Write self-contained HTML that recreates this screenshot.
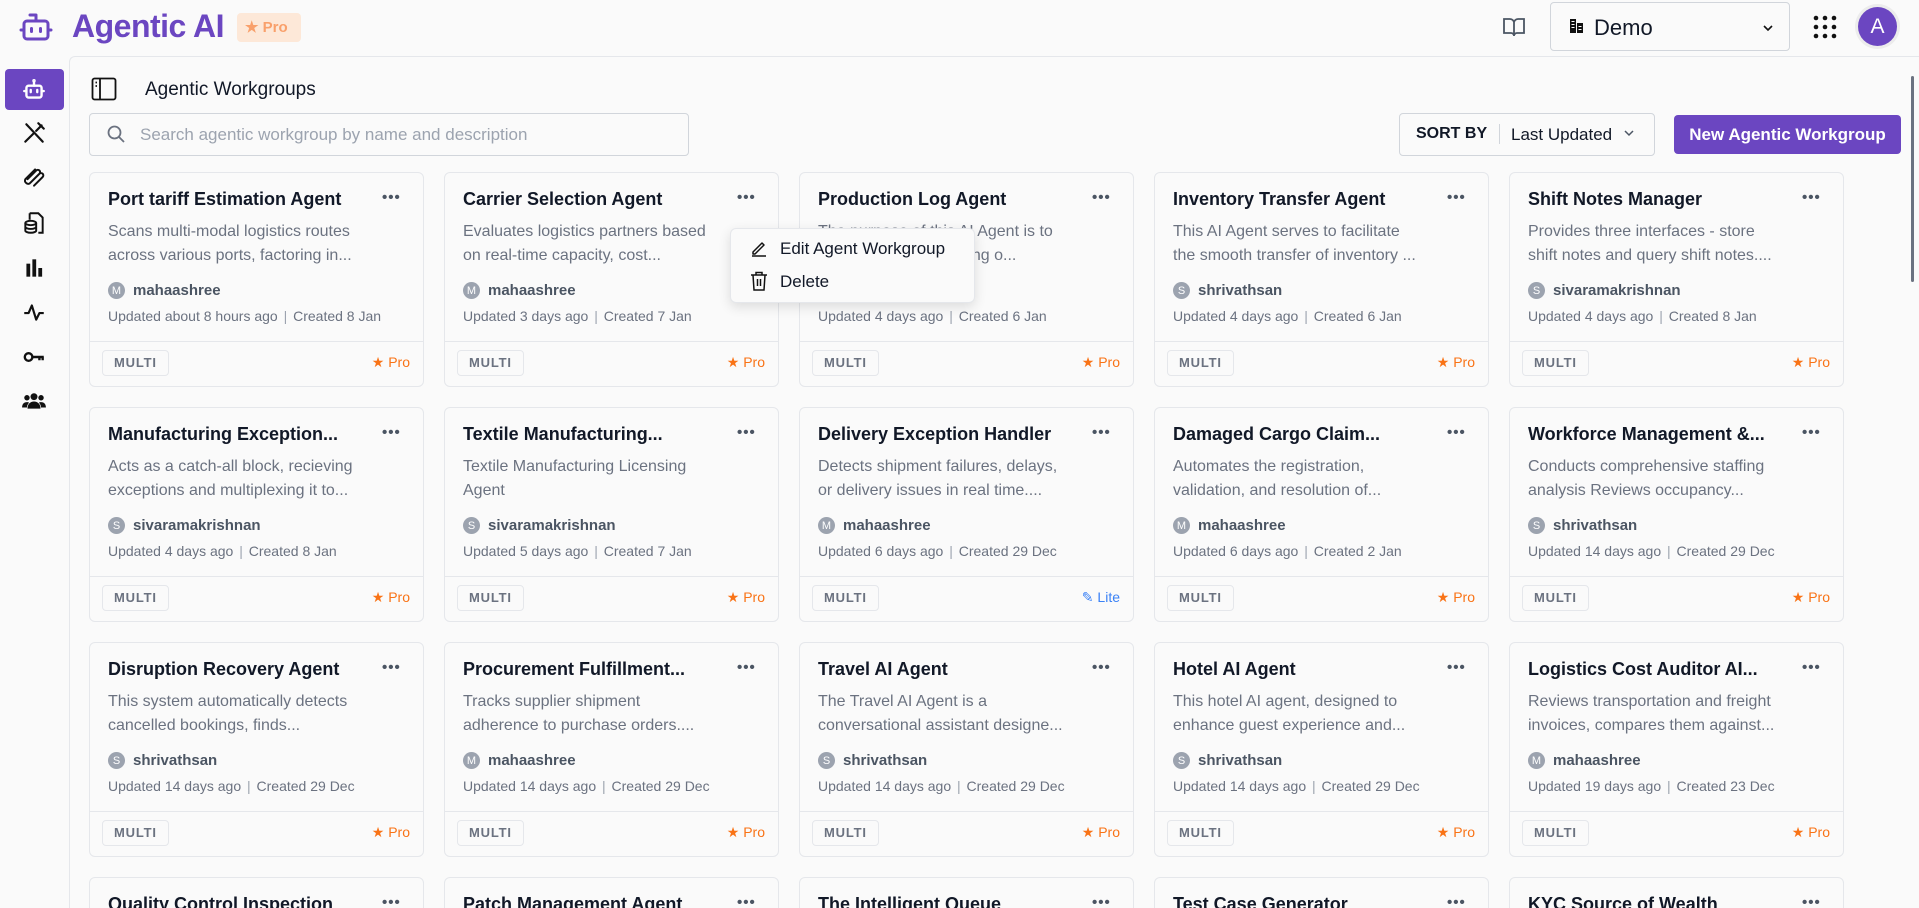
<!DOCTYPE html>
<html style="width:1919px;height:908px;overflow:hidden"><head><meta charset="utf-8"><style>
*{box-sizing:border-box;margin:0;padding:0}
body{width:1919px;height:908px;overflow:hidden;background:#fafafa;font-family:"Liberation Sans",Arial,sans-serif;color:#111827;position:relative}
.abs{position:absolute}
.card{position:absolute;width:335px;height:215px;border:1px solid #e5e7eb;border-radius:6px;background:#fafafa;overflow:hidden}
.t{position:absolute;left:18px;top:16px;width:262px;font-size:18px;font-weight:700;white-space:nowrap;overflow:hidden;color:#111827}
.dots{position:absolute;left:292px;top:16px;font-size:15px;font-weight:700;color:#4b5563;letter-spacing:1px}
.d{position:absolute;left:18px;top:47px;width:310px;font-size:16px;line-height:24px;color:#6b7280;white-space:nowrap}
.a{position:absolute;left:18px;top:109px;font-size:15px;font-weight:600;color:#4b5563;display:flex;align-items:center;gap:8px}
.av{width:17px;height:17px;border-radius:50%;background:#9ca3af;color:#fff;font-size:11px;display:flex;align-items:center;justify-content:center;font-weight:400}
.u{position:absolute;left:18px;top:135px;font-size:14px;color:#6b7280;white-space:nowrap}
.u b{font-weight:400;color:#9ca3af;margin:0 2px}
.f{position:absolute;left:0;right:0;top:168px;border-top:1px solid #e5e7eb}
.tag{position:absolute;left:12px;top:177px;height:26px;padding:0 11px;border:1px solid #e5e7eb;border-radius:4px;font-size:13px;font-weight:600;color:#6b7280;line-height:24px;letter-spacing:.8px;background:#fafafa}
.pro{position:absolute;right:13px;top:181px;font-size:14px;color:#f97316}
.lite{position:absolute;right:13px;top:181px;font-size:14px;color:#3b82f6}
.si{position:absolute;left:21px;width:26px;height:26px}
</style></head><body>
<!-- header -->
<svg class="abs" style="left:18px;top:9px" width="36" height="36" viewBox="0 0 24 24" fill="none" stroke="#6b46c1" stroke-width="2" stroke-linecap="round" stroke-linejoin="round"><path d="M12 8V4H8"/><rect x="4" y="8" width="16" height="12" rx="2"/><path d="M2 14h2M20 14h2M15 13v2M9 13v2"/></svg>
<div class="abs" style="left:72px;top:8px;font-size:32px;font-weight:700;color:#6b46c1;letter-spacing:-.5px">Agentic AI</div>
<div class="abs" style="left:237px;top:13px;width:64px;height:29px;background:#fde8d8;border-radius:4px;color:#f9a06b;font-size:15px;font-weight:600;line-height:29px;padding-left:8px">★ Pro</div>
<svg class="abs" style="left:1502px;top:15px" width="24" height="24" viewBox="0 0 24 24" fill="none" stroke="#4b5563" stroke-width="1.8"><path d="M2 4h6a4 4 0 0 1 4 4v13a3 3 0 0 0-3-3H2zM22 4h-6a4 4 0 0 0-4 4v13a3 3 0 0 1 3-3h7z"/></svg>
<div class="abs" style="left:1550px;top:2px;width:240px;height:49px;border:1px solid #d1d5db;border-radius:4px;background:#fafafa"></div>
<svg class="abs" style="left:1569px;top:18px" width="16" height="16" viewBox="0 0 16 16" fill="#111"><rect x="1" y="1" width="6" height="14"/><rect x="8" y="5" width="6" height="10"/><rect x="2.5" y="3" width="3" height="1" fill="#fff"/><rect x="2.5" y="6" width="3" height="1" fill="#fff"/><rect x="2.5" y="9" width="3" height="1" fill="#fff"/><rect x="9.5" y="8" width="3" height="1" fill="#fff"/><rect x="9.5" y="11" width="3" height="1" fill="#fff"/></svg>
<div class="abs" style="left:1594px;top:15px;font-size:22px;color:#111827">Demo</div>
<svg class="abs" style="left:1761px;top:21px" width="14" height="14" viewBox="0 0 14 14" fill="none" stroke="#111" stroke-width="1.6"><path d="M3 5l4 4 4-4"/></svg>
<svg class="abs" style="left:1813px;top:15px" width="24" height="24" viewBox="0 0 24 24" fill="#111"><circle cx="3" cy="3" r="2.3"/><circle cx="12" cy="3" r="2.3"/><circle cx="21" cy="3" r="2.3"/><circle cx="3" cy="12" r="2.3"/><circle cx="12" cy="12" r="2.3"/><circle cx="21" cy="12" r="2.3"/><circle cx="3" cy="21" r="2.3"/><circle cx="12" cy="21" r="2.3"/><circle cx="21" cy="21" r="2.3"/></svg>
<div class="abs" style="left:1855px;top:4px;width:45px;height:45px;border-radius:50%;background:#ececec"></div>
<div class="abs" style="left:1858px;top:7px;width:39px;height:39px;border-radius:50%;background:#6b46c1;color:#fff;font-size:21px;line-height:39px;text-align:center">A</div>
<!-- main panel -->
<div class="abs" style="left:69px;top:56px;width:1850px;height:852px;border-left:1px solid #e5e7eb;border-top:1px solid #e5e7eb;border-top-left-radius:6px;background:#fafafa"></div>
<div class="abs" style="left:1911px;top:76px;width:3px;height:206px;background:#6b7280;border-radius:2px"></div>
<!-- sidebar -->
<div class="abs" style="left:5px;top:69px;width:59px;height:41px;background:#6b46c1;border-radius:4px"></div>
<svg class="si" style="top:77px" viewBox="0 0 24 24" fill="none" stroke="#fff" stroke-width="2.2" stroke-linecap="round" stroke-linejoin="round"><path d="M12 8V4"/><circle cx="12" cy="3.5" r=".5"/><rect x="5" y="8" width="14" height="11" rx="2"/><path d="M3 13h2M19 13h2M15 12v2M9 12v2"/></svg>
<svg class="si" style="top:120px" viewBox="0 0 24 24" fill="none" stroke="#111" stroke-width="2" stroke-linecap="round"><path d="M5 4l15 16M4 20l7-7M14 10l5-5M16 3l5 5"/></svg>
<svg class="si" style="top:164px" viewBox="0 0 24 24" fill="none" stroke="#111" stroke-width="1.8" stroke-linecap="round"><path d="M6 14l8-8a2 2 0 0 1 3 3l-9 9a3 3 0 0 1-4-4l9-9M9 17l8-8a2 2 0 0 1 3 3l-8 8"/></svg>
<svg class="si" style="top:210px" viewBox="0 0 24 24" fill="none" stroke="#111" stroke-width="1.8"><path d="M8 3h8l4 4v14h-4M8 3v6"/><ellipse cx="9" cy="12" rx="5" ry="2"/><path d="M4 12v7c0 1 2 2 5 2s5-1 5-2v-7M4 15.5c0 1 2 2 5 2s5-1 5-2"/></svg>
<svg class="si" style="top:255px" viewBox="0 0 24 24" fill="#111"><rect x="5" y="8" width="3.5" height="12"/><rect x="10.5" y="4" width="3.5" height="16"/><rect x="16" y="12" width="3.5" height="8"/></svg>
<svg class="si" style="top:299px" viewBox="0 0 24 24" fill="none" stroke="#111" stroke-width="2" stroke-linejoin="round"><path d="M3 13h4l3-7 4 13 3-6h4"/></svg>
<svg class="si" style="top:344px" viewBox="0 0 24 24" fill="none" stroke="#111" stroke-width="2.2"><circle cx="7" cy="12" r="3.5"/><path d="M10.5 12H21M17 12v3M20 12v3"/></svg>
<svg class="si" style="top:388px" viewBox="0 0 24 24" fill="#111"><circle cx="12" cy="8" r="3.2"/><circle cx="5.5" cy="9" r="2.5"/><circle cx="18.5" cy="9" r="2.5"/><path d="M6 19c0-4 2.5-6.5 6-6.5s6 2.5 6 6.5z"/><path d="M1 18c0-3 1.5-5 4.5-5 1 0 1.5.2 2 .5C6 15 5.5 16.5 5.5 18z"/><path d="M23 18c0-3-1.5-5-4.5-5-1 0-1.5.2-2 .5 1.5 1.5 2 3 2 4.5z"/></svg>
<!-- title row -->
<svg class="abs" style="left:91px;top:77px" width="26" height="24" viewBox="0 0 26 24" fill="none" stroke="#111" stroke-width="1.8"><rect x="1.5" y="1.5" width="23" height="21" rx="2"/><path d="M9 1.5v21M4.5 5.5h1.5M4.5 9h1.5"/></svg>
<div class="abs" style="left:145px;top:79px;font-size:19px;color:#111827">Agentic Workgroups</div>
<div class="abs" style="left:89px;top:113px;width:600px;height:43px;border:1px solid #d1d5db;border-radius:4px;background:#fafafa"></div>
<svg class="abs" style="left:106px;top:124px" width="20" height="20" viewBox="0 0 20 20" fill="none" stroke="#6b7280" stroke-width="1.8"><circle cx="8.5" cy="8.5" r="6"/><path d="M13 13l5 5"/></svg>
<div class="abs" style="left:140px;top:125px;font-size:17px;color:#9ca3af">Search agentic workgroup by name and description</div>
<div class="abs" style="left:1399px;top:113px;width:256px;height:43px;border:1px solid #d1d5db;border-radius:4px;background:#fafafa"></div>
<div class="abs" style="left:1416px;top:125px;font-size:16px;font-weight:700;color:#111827">SORT BY</div>
<div class="abs" style="left:1499px;top:124px;width:1px;height:20px;background:#d1d5db"></div>
<div class="abs" style="left:1511px;top:125px;font-size:17px;color:#111827">Last Updated</div>
<svg class="abs" style="left:1623px;top:127px" width="12" height="12" viewBox="0 0 12 12" fill="none" stroke="#4b5563" stroke-width="1.5"><path d="M2 4l4 4 4-4"/></svg>
<div class="abs" style="left:1674px;top:115px;width:227px;height:39px;background:#6b46c1;border-radius:4px;color:#fff;font-size:17px;font-weight:700;line-height:39px;text-align:center">New Agentic Workgroup</div>

<!-- row 1 -->
<div class="card" style="left:89px;top:172px"><div class="t">Port tariff Estimation Agent</div><div class="dots">•••</div><div class="d">Scans multi-modal logistics routes<br>across various ports, factoring in...</div><div class="a"><span class="av">M</span>mahaashree</div><div class="u">Updated about 8 hours ago <b>|</b> Created 8 Jan</div><div class="f"></div><div class="tag">MULTI</div><div class="pro">★ Pro</div></div>
<div class="card" style="left:444px;top:172px"><div class="t">Carrier Selection Agent</div><div class="dots">•••</div><div class="d">Evaluates logistics partners based<br>on real-time capacity, cost...</div><div class="a"><span class="av">M</span>mahaashree</div><div class="u">Updated 3 days ago <b>|</b> Created 7 Jan</div><div class="f"></div><div class="tag">MULTI</div><div class="pro">★ Pro</div></div>
<div class="card" style="left:799px;top:172px"><div class="t">Production Log Agent</div><div class="dots">•••</div><div class="d">The purpose of this AI Agent is to<br>streamline the gathering o...</div><div class="a"><span class="av">M</span>mahaashree</div><div class="u">Updated 4 days ago <b>|</b> Created 6 Jan</div><div class="f"></div><div class="tag">MULTI</div><div class="pro">★ Pro</div></div>
<div class="card" style="left:1154px;top:172px"><div class="t">Inventory Transfer Agent</div><div class="dots">•••</div><div class="d">This AI Agent serves to facilitate<br>the smooth transfer of inventory ...</div><div class="a"><span class="av">S</span>shrivathsan</div><div class="u">Updated 4 days ago <b>|</b> Created 6 Jan</div><div class="f"></div><div class="tag">MULTI</div><div class="pro">★ Pro</div></div>
<div class="card" style="left:1509px;top:172px"><div class="t">Shift Notes Manager</div><div class="dots">•••</div><div class="d">Provides three interfaces - store<br>shift notes and query shift notes....</div><div class="a"><span class="av">S</span>sivaramakrishnan</div><div class="u">Updated 4 days ago <b>|</b> Created 8 Jan</div><div class="f"></div><div class="tag">MULTI</div><div class="pro">★ Pro</div></div>
<!-- row 2 -->
<div class="card" style="left:89px;top:407px"><div class="t">Manufacturing Exception...</div><div class="dots">•••</div><div class="d">Acts as a catch-all block, recieving<br>exceptions and multiplexing it to...</div><div class="a"><span class="av">S</span>sivaramakrishnan</div><div class="u">Updated 4 days ago <b>|</b> Created 8 Jan</div><div class="f"></div><div class="tag">MULTI</div><div class="pro">★ Pro</div></div>
<div class="card" style="left:444px;top:407px"><div class="t">Textile Manufacturing...</div><div class="dots">•••</div><div class="d">Textile Manufacturing Licensing<br>Agent</div><div class="a"><span class="av">S</span>sivaramakrishnan</div><div class="u">Updated 5 days ago <b>|</b> Created 7 Jan</div><div class="f"></div><div class="tag">MULTI</div><div class="pro">★ Pro</div></div>
<div class="card" style="left:799px;top:407px"><div class="t">Delivery Exception Handler</div><div class="dots">•••</div><div class="d">Detects shipment failures, delays,<br>or delivery issues in real time....</div><div class="a"><span class="av">M</span>mahaashree</div><div class="u">Updated 6 days ago <b>|</b> Created 29 Dec</div><div class="f"></div><div class="tag">MULTI</div><div class="lite">✎ Lite</div></div>
<div class="card" style="left:1154px;top:407px"><div class="t">Damaged Cargo Claim...</div><div class="dots">•••</div><div class="d">Automates the registration,<br>validation, and resolution of...</div><div class="a"><span class="av">M</span>mahaashree</div><div class="u">Updated 6 days ago <b>|</b> Created 2 Jan</div><div class="f"></div><div class="tag">MULTI</div><div class="pro">★ Pro</div></div>
<div class="card" style="left:1509px;top:407px"><div class="t">Workforce Management &amp;...</div><div class="dots">•••</div><div class="d">Conducts comprehensive staffing<br>analysis Reviews occupancy...</div><div class="a"><span class="av">S</span>shrivathsan</div><div class="u">Updated 14 days ago <b>|</b> Created 29 Dec</div><div class="f"></div><div class="tag">MULTI</div><div class="pro">★ Pro</div></div>
<!-- row 3 -->
<div class="card" style="left:89px;top:642px"><div class="t">Disruption Recovery Agent</div><div class="dots">•••</div><div class="d">This system automatically detects<br>cancelled bookings, finds...</div><div class="a"><span class="av">S</span>shrivathsan</div><div class="u">Updated 14 days ago <b>|</b> Created 29 Dec</div><div class="f"></div><div class="tag">MULTI</div><div class="pro">★ Pro</div></div>
<div class="card" style="left:444px;top:642px"><div class="t">Procurement Fulfillment...</div><div class="dots">•••</div><div class="d">Tracks supplier shipment<br>adherence to purchase orders....</div><div class="a"><span class="av">M</span>mahaashree</div><div class="u">Updated 14 days ago <b>|</b> Created 29 Dec</div><div class="f"></div><div class="tag">MULTI</div><div class="pro">★ Pro</div></div>
<div class="card" style="left:799px;top:642px"><div class="t">Travel AI Agent</div><div class="dots">•••</div><div class="d">The Travel AI Agent is a<br>conversational assistant designe...</div><div class="a"><span class="av">S</span>shrivathsan</div><div class="u">Updated 14 days ago <b>|</b> Created 29 Dec</div><div class="f"></div><div class="tag">MULTI</div><div class="pro">★ Pro</div></div>
<div class="card" style="left:1154px;top:642px"><div class="t">Hotel AI Agent</div><div class="dots">•••</div><div class="d">This hotel AI agent, designed to<br>enhance guest experience and...</div><div class="a"><span class="av">S</span>shrivathsan</div><div class="u">Updated 14 days ago <b>|</b> Created 29 Dec</div><div class="f"></div><div class="tag">MULTI</div><div class="pro">★ Pro</div></div>
<div class="card" style="left:1509px;top:642px"><div class="t">Logistics Cost Auditor AI...</div><div class="dots">•••</div><div class="d">Reviews transportation and freight<br>invoices, compares them against...</div><div class="a"><span class="av">M</span>mahaashree</div><div class="u">Updated 19 days ago <b>|</b> Created 23 Dec</div><div class="f"></div><div class="tag">MULTI</div><div class="pro">★ Pro</div></div>
<!-- row 4 -->
<div class="card" style="left:89px;top:877px;height:40px"><div class="t">Quality Control Inspection</div><div class="dots">•••</div></div>
<div class="card" style="left:444px;top:877px;height:40px"><div class="t">Patch Management Agent</div><div class="dots">•••</div></div>
<div class="card" style="left:799px;top:877px;height:40px"><div class="t">The Intelligent Queue</div><div class="dots">•••</div></div>
<div class="card" style="left:1154px;top:877px;height:40px"><div class="t">Test Case Generator</div><div class="dots">•••</div></div>
<div class="card" style="left:1509px;top:877px;height:40px"><div class="t">KYC Source of Wealth</div><div class="dots">•••</div></div>
<!-- dropdown -->
<div class="abs" style="left:730px;top:228px;width:245px;height:75px;background:#fafafa;border:1px solid #e5e7eb;border-radius:6px;box-shadow:0 4px 12px rgba(0,0,0,.12)"></div>
<svg class="abs" style="left:750px;top:239px" width="18" height="18" viewBox="0 0 18 18" fill="none" stroke="#111" stroke-width="1.5" stroke-linejoin="round"><path d="M3 13l9-9 2 2-9 9H3zM2 17h14"/></svg>
<div class="abs" style="left:780px;top:239px;font-size:17px;color:#111827">Edit Agent Workgroup</div>
<svg class="abs" style="left:750px;top:271px" width="18" height="20" viewBox="0 0 18 20" fill="none" stroke="#111" stroke-width="1.5"><path d="M1 4h16M6 4V1.5h6V4M3 4l1 15h10l1-15M7.5 8v7M10.5 8v7"/></svg>
<div class="abs" style="left:780px;top:272px;font-size:17px;color:#111827">Delete</div>
</body></html>
